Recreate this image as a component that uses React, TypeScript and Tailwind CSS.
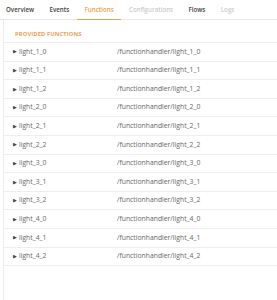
import React from "react";

const tabs = [
  { label: "Overview", state: "normal" },
  { label: "Events", state: "normal" },
  { label: "Functions", state: "active" },
  { label: "Configurations", state: "disabled" },
  { label: "Flows", state: "normal" },
  { label: "Logs", state: "disabled" },
];

const names = [
  "light_1_0",
  "light_1_1",
  "light_1_2",
  "light_2_0",
  "light_2_1",
  "light_2_2",
  "light_3_0",
  "light_3_1",
  "light_3_2",
  "light_4_0",
  "light_4_1",
  "light_4_2",
];

export default function App() {
  return (
    <div
      className="w-[277px] h-[300px] bg-white overflow-hidden flex flex-col"
      style={{ fontFamily: '"Open Sans", sans-serif' }}
    >
      <div className="flex h-[20px] border-b border-[#e6e6e6] ml-[-1.7px] shrink-0">
        {tabs.map((t) => (
          <div
            key={t.label}
            className={
              t.state === "active"
                ? "px-[7.7px] flex items-center text-[6.2px] font-semibold text-[#f0a04b] border-b-[1.5px] border-[#f0a04b] -mb-px"
                : t.state === "disabled"
                ? "px-[7.7px] flex items-center text-[6.2px] font-semibold text-[#cccccc]"
                : "px-[7.7px] flex items-center text-[6.2px] font-semibold text-[#444]"
            }
          >
            {t.label}
          </div>
        ))}
      </div>
      <div className="flex-1 ml-[3px] border-l border-[#ececec] flex flex-col">
        <div className="h-[23px] flex items-end pb-[3px] pl-[11px] text-[5.8px] font-bold text-[#f0a04b] tracking-[0.1px] border-b border-[#eeeeee]">
          PROVIDED FUNCTIONS
        </div>
        {names.map((n) => (
          <div
            key={n}
            className="h-[18.6px] flex items-center border-b border-[#eeeeee] text-[6.8px] text-[#666]"
          >
            <div className="w-[113px] flex items-center pl-[9px]">
              <span className="text-[4.5px] text-[#444] mr-[2px]">▶</span>
              <span>{n}</span>
            </div>
            <div>/functionhandler/{n}</div>
          </div>
        ))}
      </div>
    </div>
  );
}
